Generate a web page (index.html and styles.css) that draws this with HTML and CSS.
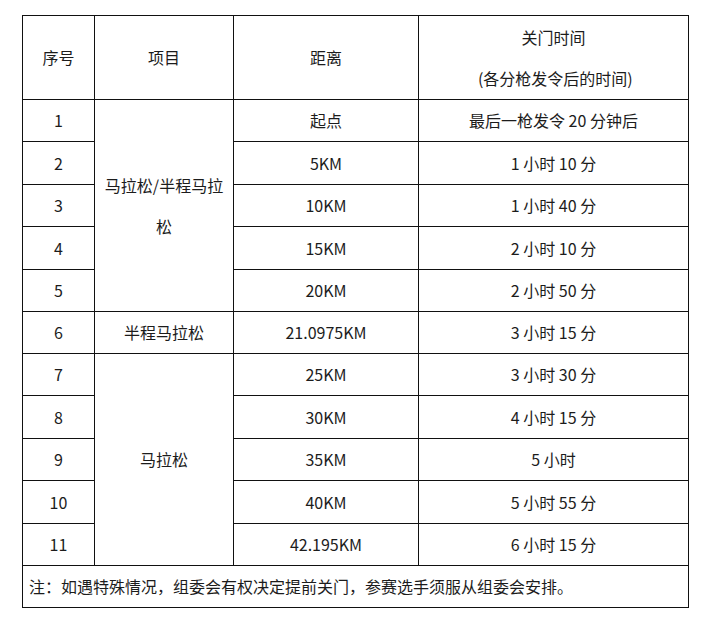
FILE: index.html
```html
<!DOCTYPE html>
<html lang="zh-CN">
<head>
<meta charset="utf-8">
<title>关门时间</title>
<link rel="stylesheet" href="styles.css">
</head>
<body>
<table class="cutoff">
  <colgroup>
    <col class="c-no">
    <col class="c-item">
    <col class="c-dist">
    <col class="c-time">
  </colgroup>
  <thead>
    <tr class="r-head">
      <th>序号</th>
      <th>项目</th>
      <th>距离</th>
      <th class="two-line">关门时间<br>&nbsp;(各分枪发令后的时间)</th>
    </tr>
  </thead>
  <tbody>
    <tr class="r-a"><td>1</td><td rowspan="5" class="wrap">马拉松/半程马拉松</td><td>起点</td><td>最后一枪发令 20 分钟后</td></tr>
    <tr class="r-b"><td>2</td><td>5KM</td><td>1 小时 10 分</td></tr>
    <tr class="r-a"><td>3</td><td>10KM</td><td>1 小时 40 分</td></tr>
    <tr class="r-b"><td>4</td><td>15KM</td><td>2 小时 10 分</td></tr>
    <tr class="r-a"><td>5</td><td>20KM</td><td>2 小时 50 分</td></tr>
    <tr class="r-c"><td>6</td><td>半程马拉松</td><td>21.0975KM</td><td>3 小时 15 分</td></tr>
    <tr class="r-a"><td>7</td><td rowspan="5">马拉松</td><td>25KM</td><td>3 小时 30 分</td></tr>
    <tr class="r-b"><td>8</td><td>30KM</td><td>4 小时 15 分</td></tr>
    <tr class="r-a"><td>9</td><td>35KM</td><td>5 小时</td></tr>
    <tr class="r-b"><td>10</td><td>40KM</td><td>5 小时 55 分</td></tr>
    <tr class="r-a"><td>11</td><td>42.195KM</td><td>6 小时 15 分</td></tr>
    <tr class="r-note"><td colspan="4" class="note">注：如遇特殊情况，组委会有权决定提前关门，参赛选手须服从组委会安排。</td></tr>
  </tbody>
</table>
</body>
</html>
```

FILE: styles.css
```css
html, body {
  margin: 0;
  padding: 0;
  background: #ffffff;
}

body {
  padding: 15px 0 0 22px;
  font-family: "Noto Sans CJK SC", "Noto Sans", sans-serif;
  font-size: 16px;
  color: #1c1c1c;
}

.cutoff {
  border-collapse: collapse;
  table-layout: fixed;
  width: 666px;
}

.c-no { width: 72px; }
.c-item { width: 139px; }
.c-dist { width: 185px; }
.c-time { width: 270px; }

.cutoff th,
.cutoff td {
  border: 1px solid #111111;
  padding: 0 8px;
  text-align: center;
  vertical-align: middle;
  font-weight: normal;
  line-height: 41px;
}

.r-head { height: 84px; }
.r-a { height: 42px; }
.r-b { height: 43px; }
.r-c { height: 40px; }
.r-note { height: 42px; }

.cutoff td.note {
  text-align: left;
  padding: 0 6px;
}
```
